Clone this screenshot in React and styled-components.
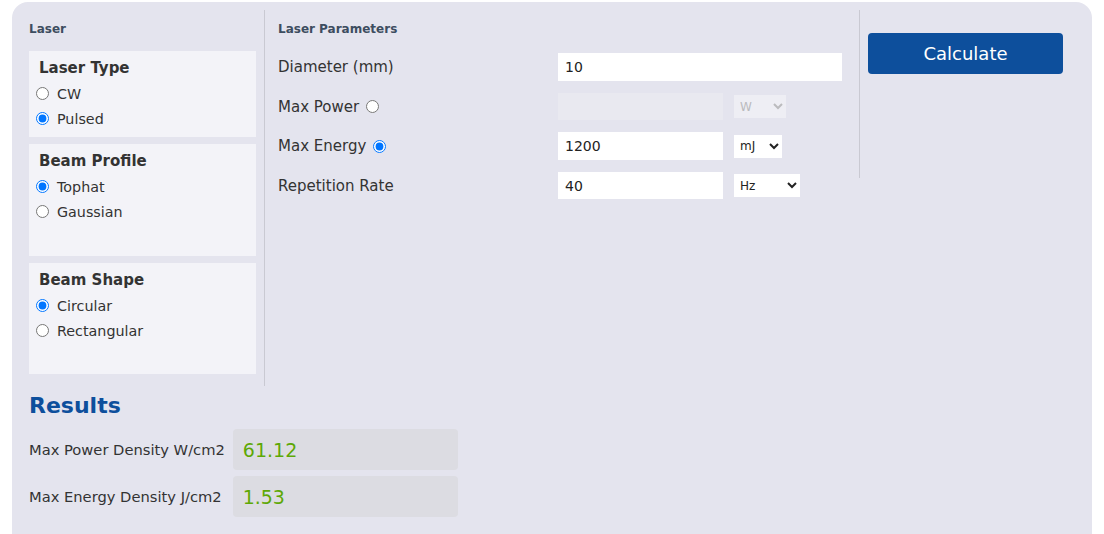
import React from 'react';
import styled, { createGlobalStyle } from 'styled-components';

const GlobalStyle = createGlobalStyle`
  body {
    margin: 0;
    background: #ffffff;
    font-family: "DejaVu Sans", Verdana, sans-serif;
    color: #333;
  }
`;

const S_Panel = styled.div`
  margin: 2px 12px 0 12px;
  width: 1080px;
  min-height: 540px;
  background: #e4e4ee;
  border-radius: 16px 16px 0 0;
  padding-top: 8px;
  box-sizing: border-box;
`;

const S_Top = styled.div`
  display: grid;
  grid-template-columns: 253px 594px 1fr;
  align-items: start;
`;

const S_Column = styled.div`
  border-left: ${p => (p.$dividerLeft ? '1px solid #c9c9d2' : 'none')};
  padding: 12px ${p => p.$right}px 12px ${p => p.$left}px;
  box-sizing: border-box;
  min-height: ${p => p.$minHeight || 0}px;
`;

const S_LeftColumn = styled(S_Column)`
  border-right: 1px solid #c9c9d2;
`;

const S_SmallHeading = styled.h4`
  margin: 0 0 ${p => p.$gap || 15}px 0;
  font-size: 12px;
  line-height: 14px;
  font-weight: bold;
  color: #3d4d60;
`;

const S_Cards = styled.div`
  display: flex;
  flex-direction: column;
  gap: 7px;
`;

const S_Card = styled.div`
  background: #f3f3f8;
  padding: 8px 10px 6px 10px;
  min-height: ${p => p.$minHeight}px;
  box-sizing: border-box;
  h3 {
    margin: 0 0 4px 0;
    font-size: 15px;
    line-height: 18px;
    font-weight: bold;
    color: #333;
  }
`;

const S_RadioRow = styled.label`
  display: flex;
  align-items: center;
  height: 25px;
  font-size: 14.3px;
  color: #333;
  input {
    margin: 0 8px 0 -3px;
    width: 13px;
    height: 13px;
  }
`;

const S_ParamRow = styled.div`
  display: flex;
  align-items: center;
  height: 28px;
  margin-bottom: 11.5px;
`;

const S_ParamLabel = styled.label`
  width: 280px;
  flex-shrink: 0;
  display: flex;
  align-items: center;
  font-size: 15px;
  color: #333;
  input {
    margin: 0 0 0 7px;
    width: 13px;
    height: 13px;
  }
`;

const S_Input = styled.input`
  width: ${p => p.$width}px;
  height: ${p => p.$height || 28}px;
  box-sizing: border-box;
  border: none;
  outline: none;
  padding: 0 7px;
  font-family: "DejaVu Sans", Verdana, sans-serif;
  font-size: 14px;
  color: #222;
  background: #ffffff;
  &:disabled {
    background: #e9e9f0;
  }
`;

const S_Select = styled.select`
  margin-left: 11px;
  width: ${p => p.$width}px;
  height: 23px;
  border: none;
  border-radius: 0;
  padding: 0 2px;
  font-family: "DejaVu Sans", Verdana, sans-serif;
  font-size: 12px;
  color: #222;
  background: #ffffff;
  outline: none;
  &:disabled {
    background: #f3f3f7;
    color: #aaa;
  }
`;

const S_Button = styled.button`
  margin-top: 11px;
  width: 195px;
  height: 41px;
  border: none;
  border-radius: 4px;
  background: #0d4f9c;
  color: #ffffff;
  font-family: "DejaVu Sans", Verdana, sans-serif;
  font-size: 18px;
  cursor: pointer;
`;

const S_Results = styled.div`
  padding: 7px 17px 0 17px;
  h2 {
    margin: 0 0 10px 0;
    font-size: 22px;
    line-height: 26px;
    font-weight: bold;
    color: #0d4f9c;
  }
`;

const S_ResultRow = styled.div`
  display: flex;
  align-items: center;
  gap: ${p => p.$gap}px;
  margin-bottom: 6px;
  span {
    font-size: 14.7px;
    color: #333;
  }
`;

const S_ResultBox = styled.div`
  width: 225px;
  height: 41px;
  box-sizing: border-box;
  padding-left: 10px;
  display: flex;
  align-items: center;
  background: #dcdce2;
  border-radius: 4px;
  font-size: 19px;
  color: #5ea806;
`;

const Radio = ({ name, label, checked }) => (
  <S_RadioRow>
    <input type="radio" name={name} defaultChecked={checked} />
    {label}
  </S_RadioRow>
);

const App = () => {
  return (
    <>
      <GlobalStyle />
      <S_Panel>
        <S_Top>
          <S_LeftColumn $left={17} $right={8} $minHeight={376}>
            <S_SmallHeading>Laser</S_SmallHeading>
            <S_Cards>
              <S_Card $minHeight={86}>
                <h3>Laser Type</h3>
                <Radio name="type" label="CW" />
                <Radio name="type" label="Pulsed" checked />
              </S_Card>
              <S_Card $minHeight={112}>
                <h3>Beam Profile</h3>
                <Radio name="profile" label="Tophat" checked />
                <Radio name="profile" label="Gaussian" />
              </S_Card>
              <S_Card $minHeight={111}>
                <h3>Beam Shape</h3>
                <Radio name="shape" label="Circular" checked />
                <Radio name="shape" label="Rectangular" />
              </S_Card>
            </S_Cards>
          </S_LeftColumn>

          <S_Column $left={13} $right={17}>
            <S_SmallHeading $gap={17}>Laser Parameters</S_SmallHeading>
            <S_ParamRow>
              <S_ParamLabel>Diameter (mm)</S_ParamLabel>
              <S_Input $width={284} defaultValue="10" />
            </S_ParamRow>
            <S_ParamRow>
              <S_ParamLabel>
                Max Power
                <input type="radio" name="mode" />
              </S_ParamLabel>
              <S_Input $width={165} $height={27} disabled />
              <S_Select $width={52} disabled>
                <option>W</option>
              </S_Select>
            </S_ParamRow>
            <S_ParamRow>
              <S_ParamLabel>
                Max Energy
                <input type="radio" name="mode" defaultChecked />
              </S_ParamLabel>
              <S_Input $width={165} defaultValue="1200" />
              <S_Select $width={48}>
                <option>mJ</option>
              </S_Select>
            </S_ParamRow>
            <S_ParamRow>
              <S_ParamLabel>Repetition Rate</S_ParamLabel>
              <S_Input $width={165} $height={27} defaultValue="40" />
              <S_Select $width={66}>
                <option>Hz</option>
              </S_Select>
            </S_ParamRow>
          </S_Column>

          <S_Column $dividerLeft $left={8} $right={8} $minHeight={168}>
            <S_Button>Calculate</S_Button>
          </S_Column>
        </S_Top>

        <S_Results>
          <h2>Results</h2>
          <S_ResultRow $gap={8}>
            <span>Max Power Density W/cm2</span>
            <S_ResultBox>61.12</S_ResultBox>
          </S_ResultRow>
          <S_ResultRow $gap={11}>
            <span>Max Energy Density J/cm2</span>
            <S_ResultBox>1.53</S_ResultBox>
          </S_ResultRow>
        </S_Results>
      </S_Panel>
    </>
  );
};

export default App;
